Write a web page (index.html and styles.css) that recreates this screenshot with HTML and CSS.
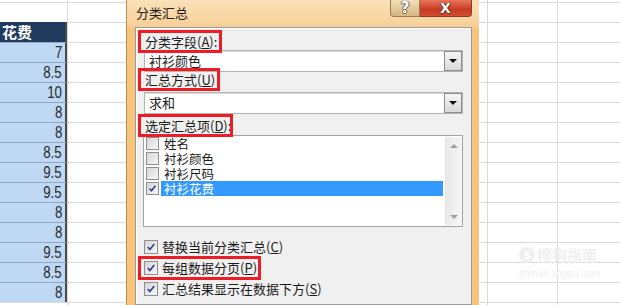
FILE: index.html
```html
<!DOCTYPE html>
<html lang="zh-CN">
<head>
    <meta charset="UTF-8">
    <title>分类汇总</title>
    <link rel="stylesheet" href="styles.css">
</head>
<body>
    <div class="screen">
        <div class="sheet sheet-left">
            <div class="col col-data">
                <div class="cell spacer"></div>
                <div class="cell head">花费</div>
                <div class="cell num"><span>7</span></div>
                <div class="cell num"><span>8.5</span></div>
                <div class="cell num"><span>10</span></div>
                <div class="cell num"><span>8</span></div>
                <div class="cell num"><span>8</span></div>
                <div class="cell num"><span>8.5</span></div>
                <div class="cell num"><span>9.5</span></div>
                <div class="cell num"><span>9.5</span></div>
                <div class="cell num"><span>8</span></div>
                <div class="cell num"><span>8</span></div>
                <div class="cell num"><span>9.5</span></div>
                <div class="cell num"><span>8.5</span></div>
                <div class="cell num"><span>8</span></div>
            </div>
            <div class="col col-blank"></div>
        </div>

        <div class="dialog">
            <div class="titlebar">
                <span class="title">分类汇总</span>
                <div class="caption-btns">
                    <span class="cap-btn help">?</span>
                    <span class="cap-btn close">X</span>
                </div>
            </div>

            <div class="panel">
                <div class="label"><span class="marked">分类字段(<u>A</u>):</span></div>
                <div class="combo">
                    <span class="combo-text">衬衫颜色</span>
                    <span class="combo-btn"><i class="tri"></i></span>
                </div>

                <div class="label"><span class="marked">汇总方式(<u>U</u>)</span></div>
                <div class="combo combo-2">
                    <span class="combo-text">求和</span>
                    <span class="combo-btn"><i class="tri"></i></span>
                </div>

                <div class="label label-3"><span class="marked">选定汇总项(<u>D</u>)</span>:</div>
                <div class="listbox">
                    <div class="items">
                        <div class="item"><span class="cb"></span><span class="item-text">姓名</span></div>
                        <div class="item"><span class="cb"></span><span class="item-text">衬衫颜色</span></div>
                        <div class="item"><span class="cb"></span><span class="item-text">衬衫尺码</span></div>
                        <div class="item selected">
                            <span class="cb"><svg viewBox="0 0 13 13"><path d="M3 6.5 L5.3 9.2 L10 3.2"/></svg></span>
                            <span class="item-text">衬衫花费</span>
                        </div>
                    </div>
                    <div class="scrollbar">
                        <i class="arrow up"></i>
                        <i class="arrow down"></i>
                    </div>
                </div>

                <div class="checks">
                    <div class="check-row">
                        <span class="cb big"><svg viewBox="0 0 13 13"><path d="M3 6.5 L5.3 9.2 L10 3.2"/></svg></span>
                        <span>替换当前分类汇总(<u>C</u>)</span>
                    </div>
                    <div class="check-row">
                        <span class="marked row-mark">
                            <span class="cb big"><svg viewBox="0 0 13 13"><path d="M3 6.5 L5.3 9.2 L10 3.2"/></svg></span>
                            <span>每组数据分页(<u>P</u>)</span>
                        </span>
                    </div>
                    <div class="check-row">
                        <span class="cb big"><svg viewBox="0 0 13 13"><path d="M3 6.5 L5.3 9.2 L10 3.2"/></svg></span>
                        <span>汇总结果显示在数据下方(<u>S</u>)</span>
                    </div>
                </div>
            </div>
        </div>

        <div class="sheet sheet-right">
            <div class="col col-narrow"></div>
            <div class="col col-wide"></div>
            <div class="watermark">
                <span class="wm-name"><b class="wm-logo">S</b>搜狗指南</span>
                <span class="wm-url">zhinan.sogou.com</span>
            </div>
        </div>
    </div>
</body>
</html>
```

FILE: styles.css
```css
* {
    margin: 0;
    padding: 0;
    box-sizing: border-box;
}

body {
    width: 620px;
    height: 305px;
    overflow: hidden;
    background: #fff;
    font-family: "Noto Sans CJK SC", "Noto Sans", sans-serif;
    font-size: 13px;
    color: #1b1b1b;
}

.screen {
    display: flex;
    height: 305px;
}

/* spreadsheet behind the dialog */
.sheet {
    display: flex;
    height: 100%;
    background-image: linear-gradient(#dadada 1px, transparent 1px);
    background-size: 100% 20px;
    background-position: 0 2px;
}

.sheet-left {
    width: 126px;
}

.sheet-right {
    flex: 1;
    position: relative;
}

.col {
    height: 100%;
}

.col-data {
    width: 67px;
}

.col-blank {
    flex: 1;
    border-left: 1px solid #dadada;
}

.col-narrow {
    width: 9px;
    border-right: 1px solid #dadada;
}

.col-wide {
    width: 70px;
    border-right: 1px solid #dadada;
}

.cell {
    height: 20px;
}

.cell.spacer {
    height: 22px;
}

.cell.head {
    background: #203a5d;
    color: #fff;
    font-weight: bold;
    font-size: 15px;
    line-height: 20px;
    padding-left: 2px;
    border-right: 2px solid #4a4a4a;
}

.cell.num {
    background: #bfd8f4;
    border-top: 1px solid #8fa7c4;
    border-right: 2px solid #4a4a4a;
    text-align: right;
    padding-right: 3px;
    font-family: "Liberation Sans", Arial, sans-serif;
    font-size: 17px;
    line-height: 19px;
    color: #2a2a2a;
}

.cell.num span {
    display: inline-block;
    transform: scaleX(0.78);
    transform-origin: right center;
}

/* dialog */
.dialog {
    width: 353px;
    height: 100%;
    display: flex;
    flex-direction: column;
    padding: 0 7px 0 8px;
    border-left: 1px solid #b98d52;
    background: linear-gradient(to bottom, #fbe1ba 0, #f7cf96 27px, #f6c47a 28px, #f6c47a 100%);
}

.titlebar {
    height: 27px;
    display: flex;
    justify-content: space-between;
    align-items: flex-start;
}

.title {
    padding: 4px 0 0 1px;
    line-height: 17px;
    color: #202020;
}

.caption-btns {
    display: flex;
}

.cap-btn {
    height: 17px;
    display: flex;
    align-items: center;
    justify-content: center;
    color: #fff;
    font-family: "DejaVu Sans", sans-serif;
    font-weight: bold;
}

.cap-btn.help {
    width: 30px;
    border: 1px solid #9a7a4e;
    border-top: none;
    border-radius: 0 0 0 4px;
    background: linear-gradient(#f1deb9, #d8b682);
    font-size: 15px;
    text-shadow: 0 0 1px #555, 1px 0 0 #7a6a55, -1px 0 0 #7a6a55, 0 1px 0 #7a6a55;
}

.cap-btn.close {
    width: 52px;
    border: 1px solid #8e3b27;
    border-top: none;
    border-left: none;
    border-radius: 0 0 4px 0;
    background: linear-gradient(#e8755a, #c73b22 60%, #d04d31);
    font-size: 14px;
    text-shadow: 0 0 1px #4a1a10, 1px 0 0 #6b2a1a, -1px 0 0 #6b2a1a, 0 1px 0 #6b2a1a;
}

.panel {
    flex: 1;
    background: #f0f0f0;
    border: 1px solid #9c9c9c;
    box-shadow: inset 1px 1px 0 #fff;
    padding: 6px 8px 0 8px;
}

.label {
    height: 16px;
    line-height: 16px;
    padding-left: 1px;
}

.marked {
    position: relative;
    display: inline-block;
}

.marked::after {
    content: "";
    position: absolute;
    top: -4px;
    bottom: -3px;
    left: -7px;
    right: -5px;
    border: 3px solid #ec1d25;
}

.combo {
    height: 22px;
    display: flex;
    background: #fff;
    border: 1px solid #b4b4b4;
    box-shadow: inset 0 1px 0 #dcdcdc;
}

.combo-2 {
    margin-top: 4px;
}

.label-3 {
    margin-top: 4px;
}

.combo-text {
    flex: 1;
    padding-left: 4px;
    line-height: 20px;
}

.combo-btn {
    width: 18px;
    border: 1px solid #8d8d8d;
    background: linear-gradient(#f6f6f6, #d9d9d9);
    display: flex;
    align-items: center;
    justify-content: center;
}

.tri {
    width: 0;
    height: 0;
    border-left: 4px solid transparent;
    border-right: 4px solid transparent;
    border-top: 4px solid #111;
}

.listbox {
    margin: 1px 0 0 -1px;
    height: 92px;
    display: flex;
    background: #fff;
    border: 1px solid #a3a3a3;
}

.items {
    flex: 1;
    padding: 0 2px;
}

.item {
    height: 15px;
    display: flex;
    align-items: center;
}

.item-text {
    margin-left: 2px;
    padding-left: 3px;
    flex: 1;
    height: 15px;
    font-size: 12.5px;
    line-height: 15px;
}

.item.selected .item-text {
    background: #3399ff;
    color: #fff;
}

.cb {
    width: 13px;
    height: 13px;
    flex-shrink: 0;
    border: 1px solid #8f8f8f;
    background: linear-gradient(135deg, #d6d6d6, #f7f7f7);
    display: flex;
}

.cb.big {
    width: 14px;
    height: 14px;
}

.cb svg {
    width: 100%;
    height: 100%;
}

.cb path {
    fill: none;
    stroke: #2d3f8f;
    stroke-width: 1.8;
}

.scrollbar {
    width: 17px;
    margin: 1px 0;
    background: linear-gradient(to right, #e9e9e9, #f5f5f5);
    border-left: 1px solid #e4e4e4;
    display: flex;
    flex-direction: column;
    justify-content: space-between;
    align-items: center;
    padding: 7px 0 6px;
}

.arrow {
    width: 0;
    height: 0;
    border-left: 4px solid transparent;
    border-right: 4px solid transparent;
}

.arrow.up {
    border-bottom: 4px solid #a0a0a0;
}

.arrow.down {
    border-top: 4px solid #a0a0a0;
}

.checks {
    margin-top: 9px;
}

.check-row {
    height: 21px;
    display: flex;
    align-items: center;
    gap: 4px;
}

.row-mark {
    display: flex;
    align-items: center;
    gap: 4px;
}

.row-mark::after {
    top: -2px;
    bottom: -3px;
    left: -6px;
    right: -4px;
}

/* faint watermark over the sheet */
.watermark {
    position: absolute;
    left: 40px;
    top: 244px;
    display: flex;
    flex-direction: column;
    color: #f0f0f0;
}

.wm-name {
    font-size: 15px;
    font-weight: bold;
    display: flex;
    align-items: center;
    gap: 2px;
}

.wm-logo {
    width: 16px;
    height: 16px;
    border-radius: 50%;
    background: #efefef;
    color: #fff;
    font-size: 11px;
    text-align: center;
    line-height: 16px;
}

.wm-url {
    font-family: "Liberation Sans", sans-serif;
    font-size: 10px;
    margin-top: 3px;
}
```
